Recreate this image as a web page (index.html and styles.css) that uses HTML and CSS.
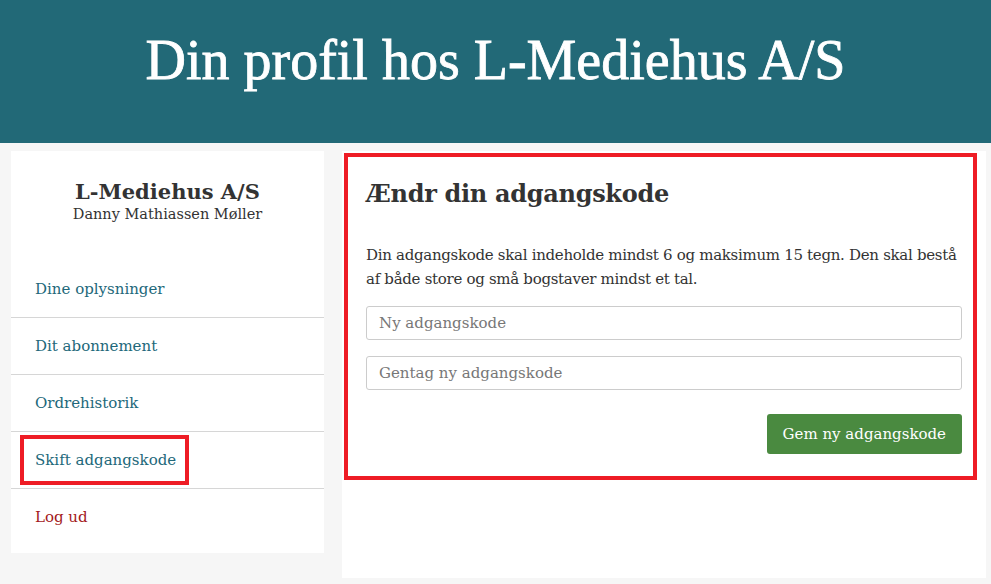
FILE: index.html
```html
<!DOCTYPE html>
<html lang="da">
<head>
    <meta charset="UTF-8">
    <meta name="viewport" content="width=device-width, initial-scale=1.0">
    <title>Din profil - L-Mediehus A/S</title>
    <link rel="stylesheet" href="styles.css">
</head>
<body>
    <!-- Top banner -->
    <header class="banner">
        <h1>Din profil hos L-Mediehus A/S</h1>
    </header>

    <div class="layout">
        <!-- Sidebar -->
        <aside class="sidebar">
            <div class="profile">
                <div class="company">L-Mediehus A/S</div>
                <div class="user">Danny Mathiassen Møller</div>
            </div>
            <nav class="menu">
                <a href="#">Dine oplysninger</a>
                <a href="#">Dit abonnement</a>
                <a href="#">Ordrehistorik</a>
                <a href="#" class="current"><span class="marked">Skift adgangskode</span></a>
                <a href="#" class="logout">Log ud</a>
            </nav>
        </aside>

        <!-- Main content -->
        <main class="panel">
            <section class="form-box">
                <h2>Ændr din adgangskode</h2>
                <p>Din adgangskode skal indeholde mindst 6 og maksimum 15 tegn. Den skal bestå af både store og små bogstaver mindst et tal.</p>
                <form class="pw-form">
                    <input type="password" placeholder="Ny adgangskode">
                    <input type="password" placeholder="Gentag ny adgangskode">
                    <div class="actions">
                        <button type="button">Gem ny adgangskode</button>
                    </div>
                </form>
            </section>
        </main>
    </div>
</body>
</html>
```
FILE: styles.css
```css
body {
    margin: 0;
    padding: 0;
    background-color: #f6f6f6;
    font-family: "DejaVu Serif", "Liberation Serif", serif;
    color: #333;
}

/* Banner */
.banner {
    background-color: #226977;
    height: 143px;
    display: flex;
    align-items: center;
    justify-content: center;
}

.banner h1 {
    margin: 0 0 24px 0;
    color: #fff;
    font-family: "Liberation Serif", serif;
    font-size: 56px;
    font-weight: normal;
    -webkit-text-stroke: 0.8px #fff;
}

.layout {
    display: flex;
    align-items: flex-start;
    gap: 18px;
    padding: 8px 5px 7px 11px;
}

/* Sidebar */
.sidebar {
    width: 313px;
    background-color: #fff;
    padding-bottom: 8px;
}

.profile {
    height: 110px;
    padding-top: 28px;
    box-sizing: border-box;
    text-align: center;
}

.company {
    font-size: 21px;
    font-weight: bold;
    color: #333;
}

.user {
    font-size: 14.5px;
    margin-top: 2px;
    color: #333;
}

.menu a {
    display: flex;
    align-items: center;
    height: 56px;
    padding-left: 24px;
    border-bottom: 1px solid #d6d6d6;
    color: #22687a;
    font-size: 15px;
    text-decoration: none;
}

.menu a:last-child {
    border-bottom: none;
}

.menu a.logout {
    color: #a3191c;
}

.menu .marked {
    border: 4px solid #ee1c25;
    padding: 12px 9px 12px 11px;
    margin-left: -15px;
    margin-top: -1px;
}

/* Main panel */
.panel {
    flex: 1;
    background-color: #fff;
    height: 425px;
    padding: 2px 9px 0 2px;
}

.form-box {
    border: 4px solid #ee1c25;
    padding: 22px 11px 22px 18px;
}

.form-box h2 {
    margin: 0 0 35px 0;
    font-size: 24px;
    letter-spacing: -0.3px;
    font-weight: bold;
    color: #333;
}

.form-box p {
    margin: 0 0 15px 0;
    font-size: 15px;
    letter-spacing: -0.3px;
    line-height: 24px;
}

.pw-form input {
    display: block;
    width: 100%;
    box-sizing: border-box;
    height: 34px;
    margin-bottom: 16px;
    padding: 0 12px;
    border: 1px solid #ccc;
    border-radius: 3px;
    font-family: "DejaVu Serif", serif;
    font-size: 15px;
    color: #333;
}

.pw-form input::placeholder {
    color: #777;
}

.actions {
    display: flex;
    justify-content: flex-end;
    padding-top: 8px;
}

.actions button {
    background-color: #4a8a40;
    color: #fff;
    border: none;
    border-radius: 3px;
    height: 40px;
    padding: 0 16px;
    font-family: "DejaVu Serif", serif;
    font-size: 15px;
    cursor: pointer;
}
```
